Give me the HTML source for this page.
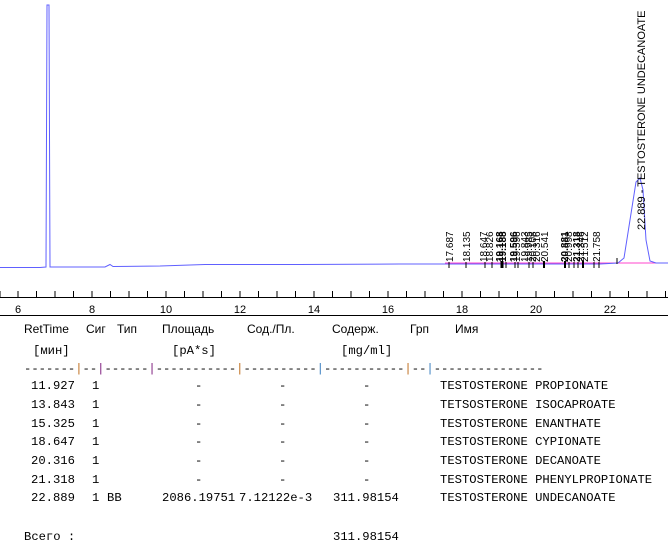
<!DOCTYPE html>
<html><head><meta charset="utf-8"><style>
body{margin:0;width:668px;height:553px;background:#fff;position:relative;overflow:hidden;font-family:"Liberation Sans","DejaVu Sans",sans-serif;}
.m{position:absolute;font-family:"Liberation Mono",monospace;font-size:12.2px;line-height:14px;white-space:pre;color:#000;}
.h{position:absolute;font-size:12px;line-height:14px;white-space:pre;color:#000;}
.b{color:#3a7fc0}.o{color:#c07020}.p{color:#802080}
</style></head><body>
<svg width="668" height="320" style="position:absolute;left:0;top:0" font-family="Liberation Sans, sans-serif">
<line x1="445" y1="263" x2="668" y2="263" stroke="#ff44cc" stroke-width="1"/>
<path d="M0 267.5 L40 267.5 L46 267 L47 5 L49 5 L50 267 L105 267 L110 264.5 L113 266.5 L160 266 L205 264.5 L300 264.5 L400 264 L600 264 L618 263 L624 258 L630 220 L636 182 L640 178 L643 190 L646 240 L650 261 L656 263 L668 263" fill="none" stroke="#6060ff" stroke-width="1"/>
<g stroke="#000" stroke-width="1">
<line x1="449" y1="262" x2="449" y2="268"/><line x1="466" y1="262" x2="466" y2="268"/>
<line x1="485" y1="262" x2="485" y2="268"/><line x1="492" y1="262" x2="492" y2="268"/>
<line x1="502" y1="261" x2="502" y2="268" stroke-width="3"/><line x1="506" y1="262" x2="506" y2="268"/>
<line x1="515" y1="262" x2="515" y2="268"/><line x1="518" y1="262" x2="518" y2="268"/>
<line x1="529" y1="262" x2="529" y2="268"/><line x1="533" y1="262" x2="533" y2="268"/>
<line x1="544" y1="261" x2="544" y2="268" stroke-width="2"/>
<line x1="565" y1="261" x2="565" y2="268" stroke-width="2"/><line x1="569" y1="262" x2="569" y2="268"/>
<line x1="574" y1="262" x2="574" y2="268"/><line x1="578" y1="262" x2="578" y2="268"/>
<line x1="583" y1="261" x2="583" y2="268" stroke-width="2"/><line x1="594" y1="262" x2="594" y2="268"/>
<line x1="599" y1="262" x2="599" y2="268"/><line x1="617" y1="258" x2="617" y2="264"/>
</g>
<g font-size="10" fill="#000">
<text transform="translate(453,262) rotate(-90)">17.687</text>
<text transform="translate(470,262) rotate(-90)">18.135</text>
<text transform="translate(487,262) rotate(-90)">18.647</text>
<text transform="translate(493,262) rotate(-90)">18.826</text>
<text transform="translate(503,262) rotate(-90)" font-weight="bold">19.168</text>
<text transform="translate(506,262) rotate(-90)" font-weight="bold">19.188</text>
<text transform="translate(517,262) rotate(-90)" font-weight="bold">19.596</text>
<text transform="translate(520,262) rotate(-90)">19.596</text>
<text transform="translate(528,262) rotate(-90)">19.843</text>
<text transform="translate(532,262) rotate(-90)">19.985</text>
<text transform="translate(536,262) rotate(-90)">20.108</text>
<text transform="translate(540,262) rotate(-90)">20.316</text>
<text transform="translate(548,262) rotate(-90)">20.541</text>
<text transform="translate(568,262) rotate(-90)" font-weight="bold">20.881</text>
<text transform="translate(572,262) rotate(-90)">20.998</text>
<text transform="translate(580,262) rotate(-90)" font-weight="bold">21.318</text>
<text transform="translate(584,262) rotate(-90)">21.346</text>
<text transform="translate(588,262) rotate(-90)">21.512</text>
<text transform="translate(600,262) rotate(-90)">21.758</text>
<text transform="translate(645,230) rotate(-90)" font-size="11">22.889 - TESTOSTERONE UNDECANOATE</text>
</g>
<line x1="0" y1="297.5" x2="668" y2="297.5" stroke="#000"/>
<line x1="0" y1="315.5" x2="668" y2="315.5" stroke="#000"/>
<g stroke="#000">
<path d="M0 291V297 M18 291V297 M36.5 291V297 M55 291V297 M73.5 291V297 M92 291V297 M110.5 291V297 M129 291V297 M147.5 291V297 M166 291V297 M184.5 291V297 M203 291V297 M221.5 291V297 M240 291V297 M258.5 291V297 M277 291V297 M295.5 291V297 M314 291V297 M332.5 291V297 M351 291V297 M369.5 291V297 M388 291V297 M406.5 291V297 M425 291V297 M443.5 291V297 M462 291V297 M480.5 291V297 M499 291V297 M517.5 291V297 M536 291V297 M554.5 291V297 M573 291V297 M591.5 291V297 M610 291V297 M628.5 291V297 M647 291V297 M665.5 291V297"/>
</g>
<g font-size="11" fill="#000" text-anchor="middle">
<text x="18" y="313">6</text><text x="92" y="313">8</text><text x="166" y="313">10</text><text x="240" y="313">12</text><text x="314" y="313">14</text><text x="388" y="313">16</text><text x="462" y="313">18</text><text x="536" y="313">20</text><text x="610" y="313">22</text>
</g>
</svg>
<div class="h" style="left:24px;top:322px">RetTime</div>
<div class="h" style="left:86px;top:322px">Сиг</div>
<div class="h" style="left:117px;top:322px">Тип</div>
<div class="h" style="left:162px;top:322px">Площадь</div>
<div class="h" style="left:247px;top:322px">Сод./Пл.</div>
<div class="h" style="left:332px;top:322px">Содерж.</div>
<div class="h" style="left:410px;top:322px">Грп</div>
<div class="h" style="left:455px;top:322px">Имя</div>
<div class="m" style="left:33px;top:344px">[мин]</div>
<div class="m" style="left:172px;top:344px">[pA*s]</div>
<div class="m" style="left:341px;top:344px">[mg/ml]</div>
<div class="m" style="left:24px;top:362px">-------<span class="o">|</span>--<span class="p">|</span>------<span class="p">|</span>-----------<span class="o">|</span>----------<span class="b">|</span>-----------<span class="o">|</span>--<span class="b">|</span>---------------</div>

<div class="m" style="left:31px;top:379px">11.927</div><div class="m" style="left:92px;top:379px">1</div><div class="m" style="left:195px;top:379px">-</div><div class="m" style="left:279px;top:379px">-</div><div class="m" style="left:363px;top:379px">-</div><div class="m" style="left:440px;top:379px">TESTOSTERONE PROPIONATE</div>
<div class="m" style="left:31px;top:398px">13.843</div><div class="m" style="left:92px;top:398px">1</div><div class="m" style="left:195px;top:398px">-</div><div class="m" style="left:279px;top:398px">-</div><div class="m" style="left:363px;top:398px">-</div><div class="m" style="left:440px;top:398px">TETSOSTERONE ISOCAPROATE</div>
<div class="m" style="left:31px;top:417px">15.325</div><div class="m" style="left:92px;top:417px">1</div><div class="m" style="left:195px;top:417px">-</div><div class="m" style="left:279px;top:417px">-</div><div class="m" style="left:363px;top:417px">-</div><div class="m" style="left:440px;top:417px">TESTOSTERONE ENANTHATE</div>
<div class="m" style="left:31px;top:435px">18.647</div><div class="m" style="left:92px;top:435px">1</div><div class="m" style="left:195px;top:435px">-</div><div class="m" style="left:279px;top:435px">-</div><div class="m" style="left:363px;top:435px">-</div><div class="m" style="left:440px;top:435px">TESTOSTERONE CYPIONATE</div>
<div class="m" style="left:31px;top:454px">20.316</div><div class="m" style="left:92px;top:454px">1</div><div class="m" style="left:195px;top:454px">-</div><div class="m" style="left:279px;top:454px">-</div><div class="m" style="left:363px;top:454px">-</div><div class="m" style="left:440px;top:454px">TESTOSTERONE DECANOATE</div>
<div class="m" style="left:31px;top:473px">21.318</div><div class="m" style="left:92px;top:473px">1</div><div class="m" style="left:195px;top:473px">-</div><div class="m" style="left:279px;top:473px">-</div><div class="m" style="left:363px;top:473px">-</div><div class="m" style="left:440px;top:473px">TESTOSTERONE PHENYLPROPIONATE</div>
<div class="m" style="left:31px;top:491px">22.889</div><div class="m" style="left:92px;top:491px">1</div><div class="m" style="left:107px;top:491px">BB</div><div class="m" style="left:162px;top:491px">2086.19751</div><div class="m" style="left:239px;top:491px">7.12122e-3</div><div class="m" style="left:333px;top:491px">311.98154</div><div class="m" style="left:440px;top:491px">TESTOSTERONE UNDECANOATE</div>
<div class="m" style="left:24px;top:530px">Всего :</div><div class="m" style="left:333px;top:530px">311.98154</div>
</body></html>
